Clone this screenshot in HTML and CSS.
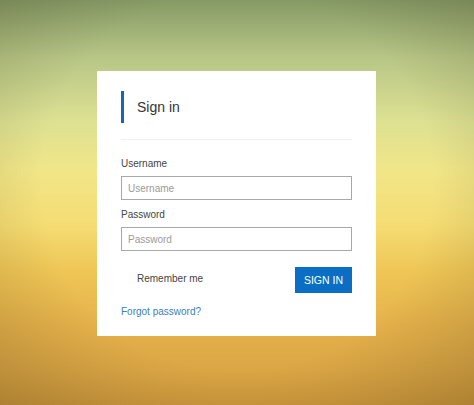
FILE: index.html
```html
<!DOCTYPE html>
<html lang="en">
<head>
    <meta charset="utf8"/>
    <title>Sign in</title>
    <meta name="viewport" content="width=device-width, initial-scale=1.0"/>
    <link rel="stylesheet" href="styles.css">
</head>
<body>
<section class="page">
    <form class="card" onsubmit="return false">
        <div class="card-head">
            <span class="bar"></span>
            <h1>Sign in</h1>
        </div>

        <div class="field">
            <label for="user">Username</label>
            <input id="user" type="text" placeholder="Username">
        </div>
        <div class="field">
            <label for="pass">Password</label>
            <input id="pass" type="password" placeholder="Password">
        </div>

        <div class="actions">
            <label class="remember">Remember me</label>
            <button class="btn" type="submit">SIGN IN</button>
        </div>

        <a class="forgot" href="#">Forgot password?</a>
    </form>
</section>
</body>
</html>
```

FILE: styles.css
```css
html, body {
    margin: 0;
    padding: 0;
}

body {
    font-family: "Liberation Sans", Arial, sans-serif;
    font-size: 10px;
    color: #333;
    min-height: 405px;
    background:
        radial-gradient(ellipse 75% 85% at 50% 45%, rgba(0, 0, 0, 0) 55%, rgba(50, 40, 10, 0.24) 100%),
        linear-gradient(to bottom, #869a66 0%, #b7c686 14%, #dde192 30%, #f1e688 42%, #f5dd74 55%, #efc656 67%, #e6b24b 80%, #dba645 91%, #cd983c 100%);
}

.page {
    display: flex;
    padding: 71px 0 0 97px;
}

.card {
    width: 231px;
    background: #fff;
    padding: 20px 24px 17px 24px;
}

.card-head {
    display: flex;
    align-items: center;
    gap: 13px;
    padding-bottom: 16px;
    border-bottom: 1px solid #efefef;
    margin-bottom: 17px;
}

.bar {
    width: 3px;
    height: 32px;
    background: #1565b8;
}

.card-head h1 {
    margin: 0;
    font-size: 14px;
    font-weight: normal;
    color: #333;
}

.field {
    margin-bottom: 8px;
}

.field label {
    display: block;
    line-height: 14px;
    margin-bottom: 5px;
    color: #444;
}

.field input {
    display: block;
    box-sizing: border-box;
    width: 100%;
    height: 24px;
    margin: 0;
    padding: 0 6px;
    border: 1px solid #a8a8a8;
    font-family: inherit;
    font-size: 10px;
    color: #333;
    outline: none;
}

.field input::placeholder {
    color: #9a9a9a;
}

.actions {
    display: flex;
    justify-content: space-between;
    align-items: center;
    margin-top: 16px;
}

.remember {
    padding-left: 16px;
    margin-top: -3px;
    color: #444;
}

.btn {
    width: 57px;
    height: 26px;
    border: none;
    background: #0a6fc4;
    color: #fff;
    font-family: inherit;
    font-size: 10.5px;
    padding: 0;
    cursor: pointer;
}

.forgot {
    display: block;
    margin-top: 12px;
    line-height: 14px;
    color: #3b7fc0;
    text-decoration: none;
}
```
